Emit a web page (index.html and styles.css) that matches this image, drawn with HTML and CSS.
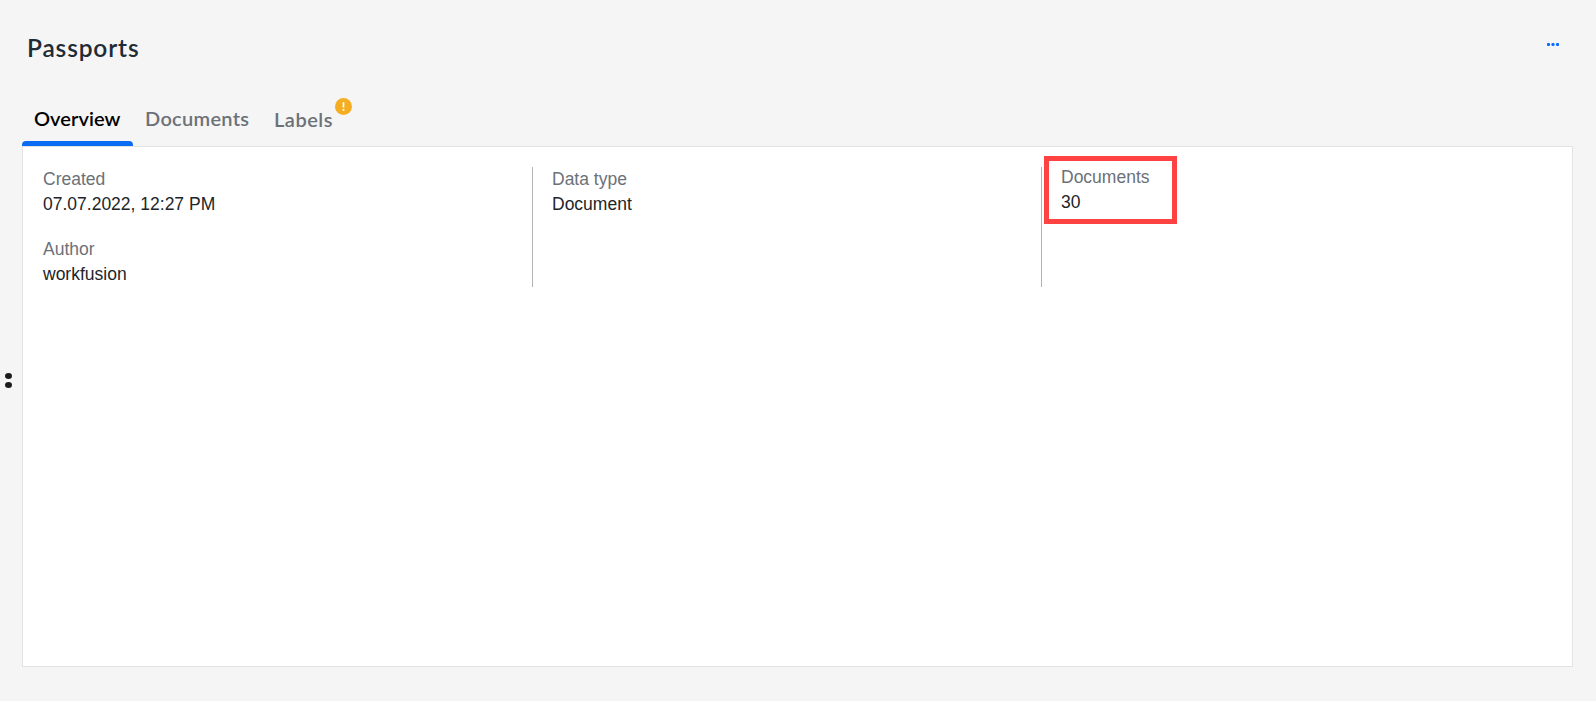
FILE: index.html
```html
<!DOCTYPE html>
<html lang="en">
<head>
    <meta charset="UTF-8">
    <meta name="viewport" content="width=device-width, initial-scale=1.0">
    <title>Passports</title>
    <link rel="stylesheet" href="styles.css">
</head>
<body>
    <!-- Drag handle -->
    <aside class="handle">
        <span class="handle-dot"></span>
        <span class="handle-dot"></span>
    </aside>

    <main class="content">
        <header class="header">
            <h1>Passports</h1>
            <button class="more" aria-label="More actions">
                <svg width="12" height="3" viewBox="0 0 12 3" fill="#0a6cff">
                    <circle cx="1.5" cy="1.5" r="1.6"/>
                    <circle cx="6" cy="1.5" r="1.6"/>
                    <circle cx="10.5" cy="1.5" r="1.6"/>
                </svg>
            </button>
        </header>

        <nav class="tabs">
            <a class="tab tab-overview active">Overview</a>
            <a class="tab tab-documents">Documents</a>
            <a class="tab tab-labels">Labels
                <svg class="badge" width="17" height="17" viewBox="0 0 17 17">
                    <circle cx="8.5" cy="8.5" r="8.5" fill="#f5ae22"/>
                    <path d="M8.5 4.2v5.3M8.5 11v1.8" stroke="#fff" stroke-width="1.7"/>
                </svg>
            </a>
        </nav>

        <section class="panel">
            <div class="column">
                <dl>
                    <dt>Created</dt>
                    <dd>07.07.2022, 12:27 PM</dd>
                </dl>
                <dl>
                    <dt>Author</dt>
                    <dd>workfusion</dd>
                </dl>
            </div>
            <div class="column">
                <dl>
                    <dt>Data type</dt>
                    <dd>Document</dd>
                </dl>
            </div>
            <div class="column">
                <dl class="highlight">
                    <dt>Documents</dt>
                    <dd>30</dd>
                </dl>
            </div>
        </section>
    </main>
</body>
</html>
```
FILE: styles.css
```css
* {
    box-sizing: border-box;
}
body {
    margin: 0;
    height: 701px;
    display: flex;
    background-color: #f5f5f5;
    color: #212529;
    font-family: "Liberation Sans", Arial, sans-serif;
    font-size: 17.5px;
    line-height: 25px;
}
.handle {
    width: 22px;
    padding: 373px 0 0 5px;
}
.handle-dot {
    display: block;
    width: 7px;
    height: 6px;
    margin-bottom: 2.5px;
    border-radius: 50%;
    background-color: #1c1c1c;
}
.content {
    width: 1551px;
    display: flex;
    flex-direction: column;
}
.header {
    height: 96px;
    padding: 33px 14px 0 5px;
    display: flex;
    justify-content: space-between;
    align-items: flex-start;
}
h1 {
    margin: 0;
    font-family: Lato, sans-serif;
    font-size: 24.5px;
    line-height: 30px;
    font-weight: 600;
    letter-spacing: 0.85px;
    color: #212b36;
}
.more {
    display: flex;
    margin-top: 10px;
    padding: 0;
    border: none;
    background: none;
}
.tabs {
    height: 50px;
    display: flex;
    font-family: Lato, sans-serif;
    font-size: 20px;
    font-weight: 600;
    color: #6c7178;
}
.tab {
    position: relative;
    height: 50px;
    padding: 10px 0 0 12px;
    white-space: nowrap;
}
.tab-overview {
    width: 111px;
    letter-spacing: 0.05px;
}
.tab-documents {
    width: 129px;
    letter-spacing: 0.3px;
}
.tab-labels {
    padding-top: 11px;
    letter-spacing: 0.5px;
}
.active {
    color: #000;
}
.active::after {
    content: "";
    position: absolute;
    left: 0;
    bottom: 0;
    width: 111px;
    height: 5px;
    border-radius: 4px 4px 0 0;
    background-color: #0a6cf5;
}
.badge {
    position: absolute;
    left: 72.5px;
    top: 1.5px;
}
.panel {
    height: 521px;
    padding: 20px 0 0;
    display: flex;
    align-items: flex-start;
    background-color: #fff;
    border: 1px solid #e3e3e3;
}
.column {
    width: 509px;
    height: 120px;
    padding-left: 19px;
    border-left: 1px solid #b3b3b3;
}
.column:first-child {
    border-left-color: transparent;
}
dl {
    margin: 0 0 20px;
}
dt {
    color: #6c7178;
}
dd {
    margin: 0;
}
/* Red frame around the document count */
.highlight {
    width: 133px;
    height: 68px;
    margin: -11px 0 0 -17px;
    padding: 4px 0 0 12px;
    border: 5px solid #ff4242;
}
```
